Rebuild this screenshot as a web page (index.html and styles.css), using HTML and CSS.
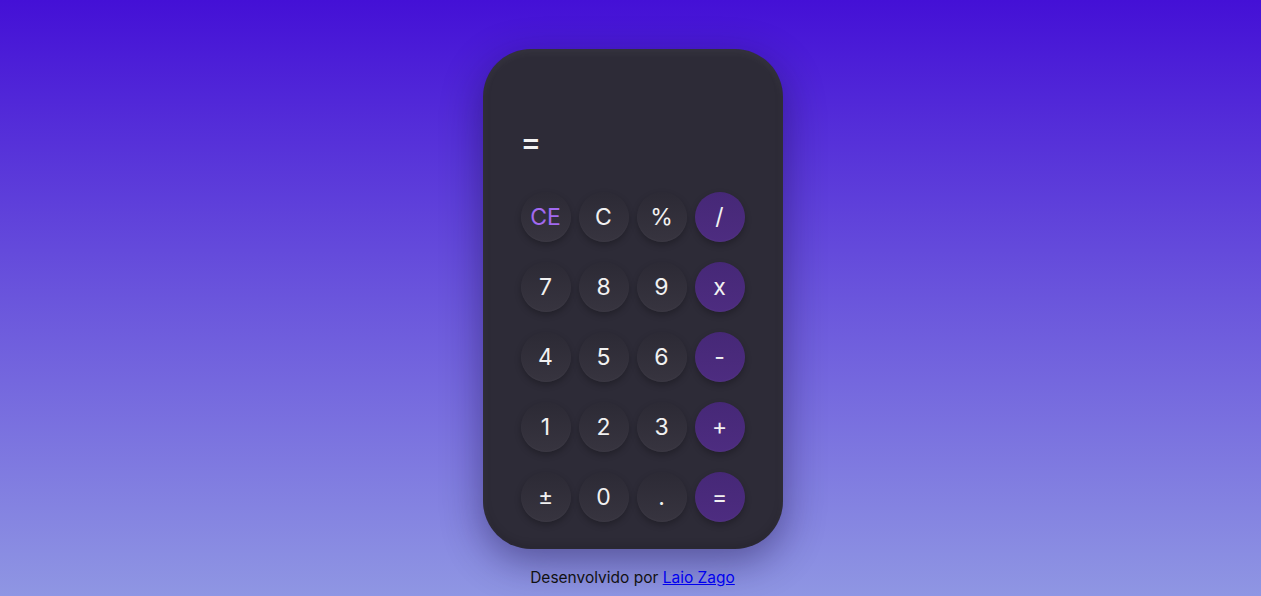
FILE: index.html
```html
<!DOCTYPE html>
<html lang="pt-BR">
<head>
<meta charset="utf-8">
<title>Calculadora</title>
<link rel="stylesheet" href="styles.css">
</head>
<body>
<main class="calculator">
  <div class="display">=</div>
  <div class="keys">
    <button class="key key-ce">CE</button>
    <button class="key">C</button>
    <button class="key">%</button>
    <button class="key key-op">/</button>
    <button class="key">7</button>
    <button class="key">8</button>
    <button class="key">9</button>
    <button class="key key-op">x</button>
    <button class="key">4</button>
    <button class="key">5</button>
    <button class="key">6</button>
    <button class="key key-op">-</button>
    <button class="key">1</button>
    <button class="key">2</button>
    <button class="key">3</button>
    <button class="key key-op">+</button>
    <button class="key">±</button>
    <button class="key">0</button>
    <button class="key">.</button>
    <button class="key key-op">=</button>
  </div>
</main>
<footer class="footer">Desenvolvido por <a href="#">Laio Zago</a></footer>
</body>
</html>
```
FILE: styles.css
```css
html, body {
  margin: 0;
  padding: 0;
}
body {
  min-height: 100vh;
  padding-left: 4px;
  box-sizing: border-box;
  background: linear-gradient(to bottom, #4410d6 0%, #6a55dc 50%, #8f96e3 100%);
  display: flex;
  flex-direction: column;
  align-items: center;
  font-family: "Inter", "Roboto", sans-serif;
}
.calculator {
  margin-top: 49px;
  width: 300px;
  height: 500px;
  box-sizing: border-box;
  padding: 0 38px 27px;
  background: #2d2b37;
  border-radius: 48px;
  box-shadow: 0 12px 40px rgba(20, 10, 60, 0.45), inset 0 3px 8px rgba(255, 255, 255, 0.06), inset 0 -3px 8px rgba(0, 0, 0, 0.15);
  display: flex;
  flex-direction: column;
  justify-content: flex-end;
}
.display {
  color: #f2f2f2;
  font-size: 31px;
  font-weight: 500;
  line-height: 36px;
  margin-bottom: 32px;
}
.keys {
  display: grid;
  grid-template-columns: repeat(4, 50px);
  column-gap: 8px;
  row-gap: 20px;
}
.key {
  width: 50px;
  height: 50px;
  border: none;
  border-radius: 50%;
  padding: 0;
  background: linear-gradient(to bottom, #2c2a35, #37343f);
  box-shadow: 0 3px 6px rgba(0, 0, 0, 0.25), inset 0 -1px 2px rgba(255, 255, 255, 0.03);
  color: #f1f1f1;
  font-family: "Inter", "Roboto", sans-serif;
  font-size: 23px;
  cursor: pointer;
}
.key-ce {
  color: #a169f0;
}
.key-op {
  background: linear-gradient(to bottom, #462877, #4d2c80);
}
.footer {
  margin-top: 19px;
  font-size: 15.5px;
  line-height: 19px;
  color: #111;
}
.footer a {
  color: #0000ee;
}
```
